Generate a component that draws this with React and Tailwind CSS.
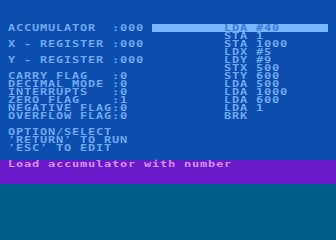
const leftLines = [
  "ACCUMULATOR  :000",
  "",
  "X - REGISTER :000",
  "",
  "Y - REGISTER :000",
  "",
  "CARRY FLAG   :0",
  "DECIMAL MODE :0",
  "INTERRUPTS   :0",
  "ZERO FLAG    :1",
  "NEGATIVE FLAG:0",
  "OVERFLOW FLAG:0",
  "",
  "OPTION/SELECT",
  "'RETURN' TO RUN",
  "'ESC' TO EDIT",
];

const program = [
  "LDA #40",
  "STA 1",
  "STA 1000",
  "LDX #5",
  "LDY #9",
  "STX 500",
  "STY 600",
  "LDA 500",
  "LDA 1000",
  "LDA 600",
  "LDA 1",
  "BRK",
];

// 8x8 character cell; glyphs squashed vertically to get the chunky look
const Row = ({ children, className = "" }) => (
  <div className={`h-2 whitespace-pre ${className}`}>
    <span className="inline-block align-top leading-[12px] origin-top scale-y-[0.7]">
      {children}
    </span>
  </div>
);

export default function App() {
  return (
    <div
      className="w-[336px] h-[240px] flex flex-col bg-[#005f8a] text-[12px] font-bold tracking-[0.78px]"
      style={{ fontFamily: '"DejaVu Sans Mono", monospace' }}
    >
      {/* main screen */}
      <div className="h-[160px] bg-[#0c4eae] text-[#70a8f0] pt-6 pl-2 flex">
        <div className="w-[144px] flex flex-col">
          {leftLines.map((l, i) => (
            <Row key={i}>{l}</Row>
          ))}
        </div>
        <div className="w-[176px] flex flex-col">
          {program.map((p, i) => (
            <Row
              key={i}
              className={`pl-[72px] ${i === 0 ? "bg-[#78b6ff] text-[#3d7ad8]" : ""}`}
            >
              {p}
            </Row>
          ))}
        </div>
      </div>

      {/* help line */}
      <div className="h-6 bg-[#6a1ac8] text-[#d88ef8] pl-2">
        <Row>Load accumulator with number</Row>
      </div>
    </div>
  );
}
